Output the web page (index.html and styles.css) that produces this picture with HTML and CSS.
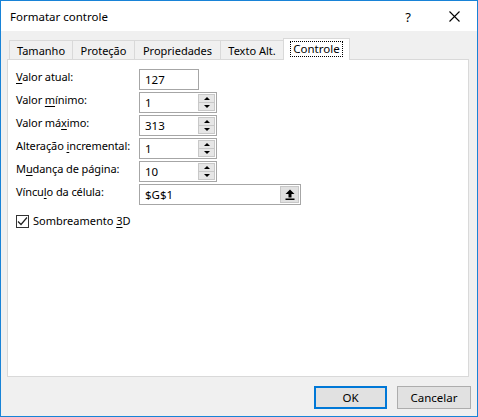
FILE: index.html
```html
<!DOCTYPE html>
<html lang="pt">
<head>
<meta charset="utf-8">
<title>Formatar controle</title>
<link rel="stylesheet" href="styles.css">
</head>
<body>
<div class="window">
  <div class="titlebar">
    <span class="title">Formatar controle</span>
    <span class="tbtn help">?</span>
    <span class="tbtn close"><svg width="11" height="11" viewBox="0 0 11 11"><path d="M0.5 0.5L10.5 10.5M10.5 0.5L0.5 10.5" stroke="#000" stroke-width="1.1" fill="none"/></svg></span>
  </div>
  <div class="tabs">
    <div class="tab t1">Tamanho</div>
    <div class="tab t2">Proteção</div>
    <div class="tab t3">Propriedades</div>
    <div class="tab t4">Texto Alt.</div>
    <div class="tab active"><span class="focus">Controle</span></div>
  </div>
  <div class="panel">
    <div class="form">
      <label class="lbl"><u>V</u>alor atual:</label>
      <div class="field small"><span class="val">127</span></div>

      <label class="lbl">Valor <u>m</u>ínimo:</label>
      <div class="field spin"><span class="val">1</span><span class="spinner"><span class="up"></span><span class="down"></span></span></div>

      <label class="lbl">Valor má<u>x</u>imo:</label>
      <div class="field spin"><span class="val">313</span><span class="spinner"><span class="up"></span><span class="down"></span></span></div>

      <label class="lbl">Alteração <u>i</u>ncremental:</label>
      <div class="field spin"><span class="val">1</span><span class="spinner"><span class="up"></span><span class="down"></span></span></div>

      <label class="lbl">M<u>u</u>dança de página:</label>
      <div class="field spin"><span class="val">10</span><span class="spinner"><span class="up"></span><span class="down"></span></span></div>

      <label class="lbl">Víncu<u>l</u>o da célula:</label>
      <div class="field wide"><span class="val">$G$1</span><span class="refbtn"><svg width="10" height="11" viewBox="0 0 10 11"><path d="M5 0.5L9.5 5H6.5V8.5H3.5V5H0.5Z" fill="#000"/><rect x="0.5" y="9.5" width="9" height="1.5" fill="#000"/></svg></span></div>
    </div>
    <div class="check">
      <span class="box"><svg width="11" height="11" viewBox="0 0 11 11"><path d="M1 5.5L4 8.5L10 1.5" stroke="#222" stroke-width="1.2" fill="none"/></svg></span>
      <span class="clabel">Sombreamento <u>3</u>D</span>
    </div>
  </div>
  <div class="footer">
    <button class="btn default">OK</button>
    <button class="btn">Cancelar</button>
  </div>
</div>
</body>
</html>
```
FILE: styles.css
```css
* { box-sizing: border-box; }
html, body { margin: 0; padding: 0; }
body {
  width: 478px;
  height: 417px;
  font-family: "Noto Sans", "Open Sans", sans-serif;
  font-size: 11px;
  color: #000;
  background: #fff;
}
.window {
  width: 478px;
  height: 417px;
  border: 1px solid #1883d7;
  background: #f0f0f0;
  display: flex;
  flex-direction: column;
}
.titlebar {
  height: 30px;
  background: #fff;
  display: flex;
  align-items: center;
  flex: none;
}
.title {
  flex: 1;
  padding-left: 9px;
  font-size: 11.5px;
  line-height: 16px;
  padding-top: 1px;
}
.tbtn {
  width: 46px;
  height: 30px;
  display: flex;
  align-items: center;
  justify-content: center;
}
.help { font-size: 13px; padding-top: 1px; }
.close svg { margin-top: 1px; }
.tabs {
  flex: none;
  height: 21px;
  margin-top: 7px;
  padding-left: 8px;
  display: flex;
  align-items: flex-end;
  position: relative;
  z-index: 1;
}
.tab {
  height: 19px;
  border: 1px solid #d9d9d9;
  border-bottom: none;
  background: #f0f0f0;
  display: flex;
  align-items: center;
  justify-content: center;
  line-height: 16px;
  margin-left: -1px;
  padding-top: 2px;
}
.t1 { width: 64px; margin-left: 0; }
.t2 { width: 63px; }
.t3 { width: 87px; }
.t4 { width: 64px; }
.tab.active {
  width: 67px;
  height: 22px;
  margin-left: -1px;
  margin-bottom: -1px;
  background: #fff;
  padding-top: 0;
  padding-bottom: 1px;
}
.focus {
  border: 1px dotted #000;
  padding: 0 2px;
  line-height: 14px;
  font-size: 11.5px;
}
.panel {
  flex: 1;
  margin: 0 8px 0 6px;
  border: 1px solid #d9d9d9;
  background: #fff;
  padding: 9px 8px 0 8px;
}
.form {
  display: grid;
  grid-template-columns: 123px auto;
  grid-auto-rows: 21px;
  row-gap: 2px;
  align-items: center;
}
.lbl {
  line-height: 16px;
  align-self: start;
  letter-spacing: -0.1px;
}
.lbl u, .clabel u { text-decoration-thickness: 1px; text-underline-offset: 2px; }
.field {
  height: 21px;
  border: 1px solid #a6a6a6;
  background: #fff;
  display: flex;
  align-items: stretch;
}
.val {
  flex: 1;
  padding-left: 5px;
  line-height: 20px;
  font-size: 11.5px;
}
.small { width: 60px; }
.spin { width: 78px; }
.wide { width: 162px; }
.spinner {
  width: 17px;
  margin: 1px;
  background: #e6e6e6;
  border: 1px solid #c8c8c8;
  display: flex;
  flex-direction: column;
}
.spinner .up, .spinner .down {
  flex: 1;
  display: flex;
  align-items: center;
  justify-content: center;
}
.spinner .up { border-bottom: 1px solid #c8c8c8; }
.spinner .up::before {
  content: "";
  border-left: 3px solid transparent;
  border-right: 3px solid transparent;
  border-bottom: 3px solid #000;
}
.spinner .down::before {
  content: "";
  border-left: 3px solid transparent;
  border-right: 3px solid transparent;
  border-top: 3px solid #000;
}
.refbtn {
  width: 19px;
  margin: 1px;
  background: #e1e1e1;
  border: 1px solid #c8c8c8;
  display: flex;
  align-items: center;
  justify-content: center;
}
.check {
  margin-top: 8px;
  display: flex;
  align-items: center;
  gap: 4px;
}
.box {
  width: 13px;
  height: 13px;
  border: 1px solid #333;
  background: #fff;
  display: flex;
  align-items: center;
  justify-content: center;
}
.clabel { line-height: 16px; }
.footer {
  flex: none;
  height: 39px;
  padding: 9px 6px 7px 0;
  display: flex;
  justify-content: flex-end;
  gap: 10px;
}
.btn {
  width: 74px;
  height: 23px;
  font-family: inherit;
  font-size: 11.5px;
  color: #000;
  background: #e1e1e1;
  border: 1px solid #adadad;
  padding: 0;
  margin: 0;
}
.btn.default {
  width: 73px;
  border: 2px solid #0078d7;
}
```
